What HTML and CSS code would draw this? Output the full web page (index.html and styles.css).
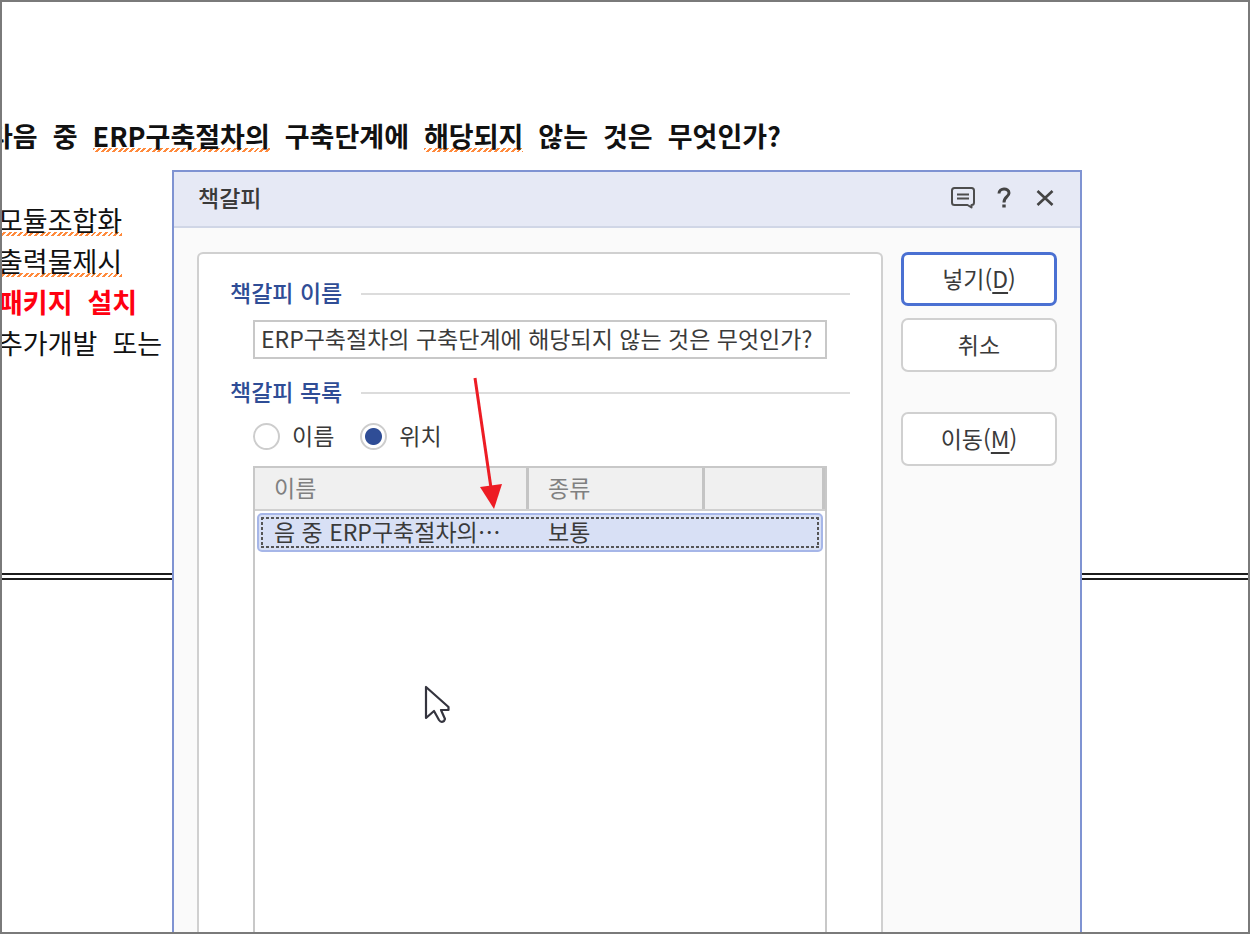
FILE: index.html
```html
<!DOCTYPE html>
<html lang="ko">
<head>
  <meta charset="UTF-8">
  <meta name="viewport" content="width=device-width, initial-scale=1.0">
  <title>책갈피</title>
  <link rel="stylesheet" href="styles.css">
</head>
<body>
  <div class="screen">
    <main class="document">
      <h1 class="question">
        <span>다음</span>
        <span>중</span>
        <span class="misspelled">ERP구축절차의</span>
        <span>구축단계에</span>
        <span class="misspelled">해당되지</span>
        <span>않는</span>
        <span>것은</span>
        <span>무엇인가?</span>
      </h1>
      <div class="answers">
        <p class="answer"><span class="misspelled">모듈조합화</span></p>
        <p class="answer"><span class="misspelled">출력물제시</span></p>
        <p class="answer correct"><span>패키지</span> <span>설치</span></p>
        <p class="answer"><span>추가개발</span> <span>또는</span></p>
      </div>
      <hr class="page-break">
    </main>

    <section class="dialog" role="dialog" aria-labelledby="dialogTitle">
      <header class="title-bar">
        <h2 id="dialogTitle">책갈피</h2>
        <button class="icon-button" type="button" aria-label="의견">
          <svg width="26" height="26" viewBox="0 0 26 26" fill="none" stroke="#4d4d4d" stroke-width="2">
            <path d="M4.500 3h17q2.500 0 2.500 2.500v12q0 2.500-2.500 2.500v2.500L17.500 20h-13Q2 20 2 17.500v-12Q2 3 4.500 3z" stroke-linejoin="round"/>
            <path d="M7 9.500h12M7 13.500h12"/>
          </svg>
        </button>
        <button class="icon-button" type="button" aria-label="도움말">
          <svg width="26" height="26" viewBox="0 0 26 26" fill="none" stroke="#444" stroke-width="3">
            <path d="M8 8.500C8 2.500 18 2.500 18 8C18 12 13 11.500 13 17.500"/>
            <path d="M11.300 21h3.400"/>
          </svg>
        </button>
        <button class="icon-button" type="button" aria-label="닫기">
          <svg width="26" height="26" viewBox="0 0 26 26" fill="none" stroke="#444" stroke-width="2.600">
            <path d="M5.500 6l15 14M20.500 6l-15 14"/>
          </svg>
        </button>
      </header>

      <form class="dialog-body">
        <div class="panel">
          <div class="group-title">
            <label for="bookmarkName">책갈피 이름</label>
          </div>
          <input class="name-input" id="bookmarkName" type="text" value="ERP구축절차의 구축단계에 해당되지 않는 것은 무엇인가?">

          <div class="group-title">
            <h3>책갈피 목록</h3>
          </div>
          <div class="sort">
            <label><input type="radio" name="sort" value="name"><span>이름</span></label>
            <label><input type="radio" name="sort" value="position" checked><span>위치</span></label>
          </div>

          <table class="bookmarks">
            <thead>
              <tr>
                <th>이름</th>
                <th>종류</th>
                <th></th>
              </tr>
            </thead>
            <tbody>
              <tr class="selected">
                <td>음 중 ERP구축절차의⋯</td>
                <td>보통</td>
                <td></td>
              </tr>
            </tbody>
          </table>
        </div>

        <div class="actions">
          <button class="action primary" type="button">넣기(<u>D</u>)</button>
          <button class="action" type="button">취소</button>
          <button class="action move" type="button">이동(<u>M</u>)</button>
        </div>
      </form>
    </section>

    <!-- Red pointer to the selected bookmark -->
    <svg class="arrow" width="40" height="134" viewBox="0 0 40 134">
      <path d="M5 1l16 110" stroke="#ed1c24" stroke-width="3"/>
      <path d="M10 110l22-3-8 25z" fill="#ed1c24"/>
    </svg>

    <svg class="cursor" width="28" height="40" viewBox="0 0 28 40">
      <path d="M3 2v31l8-7 5 9q2 3 5 1l1-2-4-9h7.500V22z" fill="#fff" stroke="#34343e" stroke-width="2.200" stroke-linejoin="round"/>
    </svg>
  </div>
</body>
</html>
```
FILE: styles.css
```css
* {
  box-sizing: border-box;
}

body {
  margin: 0;
  font-family: "Noto Sans CJK KR", sans-serif;
  font-size: 23px;
  color: #3a3a3a;
  background-color: white;
}

h1, h2, h3, p {
  margin: 0;
}

button, input {
  font: inherit;
  color: inherit;
}

.screen {
  position: relative;
  height: 100vh;
  overflow: hidden;
  border: 2px solid #7a7a7a;
}

/* Document behind the dialog */
.document {
  padding-top: 113px;
  font-size: 27px;
  line-height: 41px;
  color: #111;
}

.question {
  display: flex;
  gap: 15px;
  margin-left: -14px;
  font-size: 27px;
  font-weight: bold;
  white-space: nowrap;
}

.answers {
  margin: 43px 0 0 -4px;
}

.answer {
  display: flex;
  gap: 15px;
}

.correct {
  font-weight: bold;
  color: #ff0010;
}

.misspelled {
  background: repeating-linear-gradient(135deg, #ff8a3c 0 2px, transparent 2px 4px) 0 33px / 100% 4px no-repeat;
}

.page-break {
  margin: 210px 0 0;
  border: 0;
  border-top: 7px double #1c1c1c;
}

/* Dialog */
.dialog {
  position: absolute;
  top: 168px;
  right: 166px;
  bottom: 0;
  left: 170px;
  display: flex;
  flex-direction: column;
  overflow: hidden;
  border: 2px solid #7f93d2;
  border-bottom: 0;
  background-color: #fafafa;
}

.title-bar {
  display: flex;
  align-items: center;
  gap: 15px;
  height: 56px;
  padding: 0 22px 3px 24px;
  border-bottom: 2px solid #d0d6e6;
  background-color: #e6e9f5;
}

.title-bar h2 {
  flex: 1;
  padding-bottom: 2px;
  font-size: 23px;
  font-weight: 500;
}

.icon-button {
  display: flex;
  padding: 0;
  border: 0;
  background: none;
}

.dialog-body {
  display: flex;
  flex: 1;
  gap: 18px;
  padding: 24px 23px 0;
}

.panel {
  display: flex;
  flex: 1;
  flex-direction: column;
  padding: 22px 31px 0;
  border: 2px solid #d0d0d0;
  border-bottom: 0;
  border-radius: 6px 6px 0 0;
  background-color: white;
}

.group-title {
  display: flex;
  align-items: center;
  gap: 19px;
  height: 36px;
  font-weight: 500;
  color: #2f4d96;
}

.group-title label, .group-title h3 {
  padding-bottom: 4px;
  font-size: 23px;
  font-weight: 500;
}

.group-title::after {
  content: "";
  flex: 1;
  height: 2px;
  background-color: #dcdcdc;
}

.name-input {
  height: 39px;
  margin: 8px 23px 16px;
  padding: 0 6px 4px;
  border: 2px solid #c8c8c8;
  background-color: white;
}

.sort {
  display: flex;
  gap: 26px;
  height: 36px;
  margin: 7px 23px 12px;
}

.sort label {
  display: flex;
  align-items: center;
  gap: 12px;
}

.sort span {
  padding-bottom: 2px;
}

.sort input {
  appearance: none;
  width: 27px;
  height: 27px;
  margin: 0;
  border: 2px solid #cdcdcd;
  border-radius: 50%;
}

.sort input:checked {
  background: radial-gradient(circle, #2f4d96 8px, white 9px);
}

.bookmarks {
  display: block;
  flex: 1;
  margin: 0 23px;
  border: 2px solid #c8c8c8;
  border-bottom: 0;
}

.bookmarks thead, .bookmarks tbody {
  display: block;
}

.bookmarks tr {
  display: grid;
  grid-template-columns: 274px 176px 1fr;
}

.bookmarks thead tr {
  height: 43px;
  border-bottom: 2px solid #d0d0d0;
  background-color: #f0f0f0;
}

.bookmarks th {
  padding: 0 19px;
  border-right: 3px solid #c4c4c4;
  font-weight: normal;
  line-height: 38px;
  text-align: left;
  color: #808080;
}

.bookmarks td {
  padding: 0 15px;
  line-height: 32px;
  white-space: nowrap;
}

.bookmarks .selected {
  position: relative;
  height: 39px;
  margin: 2px;
  border: 2px solid #a6b6e8;
  border-radius: 5px;
  background-color: #d8e0f5;
}

/* Focus rectangle */
.bookmarks .selected::after {
  content: "";
  position: absolute;
  inset: 2px;
  background:
    repeating-linear-gradient(90deg, #555 0 3px, transparent 3px 5px) top / 100% 2px no-repeat,
    repeating-linear-gradient(90deg, #555 0 3px, transparent 3px 5px) bottom / 100% 2px no-repeat,
    repeating-linear-gradient(#555 0 3px, transparent 3px 5px) left / 2px 100% no-repeat,
    repeating-linear-gradient(#555 0 3px, transparent 3px 5px) right / 2px 100% no-repeat;
}

.actions {
  display: flex;
  flex-direction: column;
  gap: 12px;
  width: 156px;
}

.action {
  height: 54px;
  padding: 0 0 3px;
  border: 2px solid #d0d0d0;
  border-radius: 7px;
  background-color: white;
}

.action u {
  text-decoration-thickness: 2px;
  text-underline-offset: 4px;
}

.primary {
  border: 3px solid #4a70d2;
}

.move {
  margin-top: 28px;
}

/* Marks on top of the dialog */
.arrow {
  position: absolute;
  top: 375px;
  left: 468px;
}

.cursor {
  position: absolute;
  top: 683px;
  left: 421px;
}
```
